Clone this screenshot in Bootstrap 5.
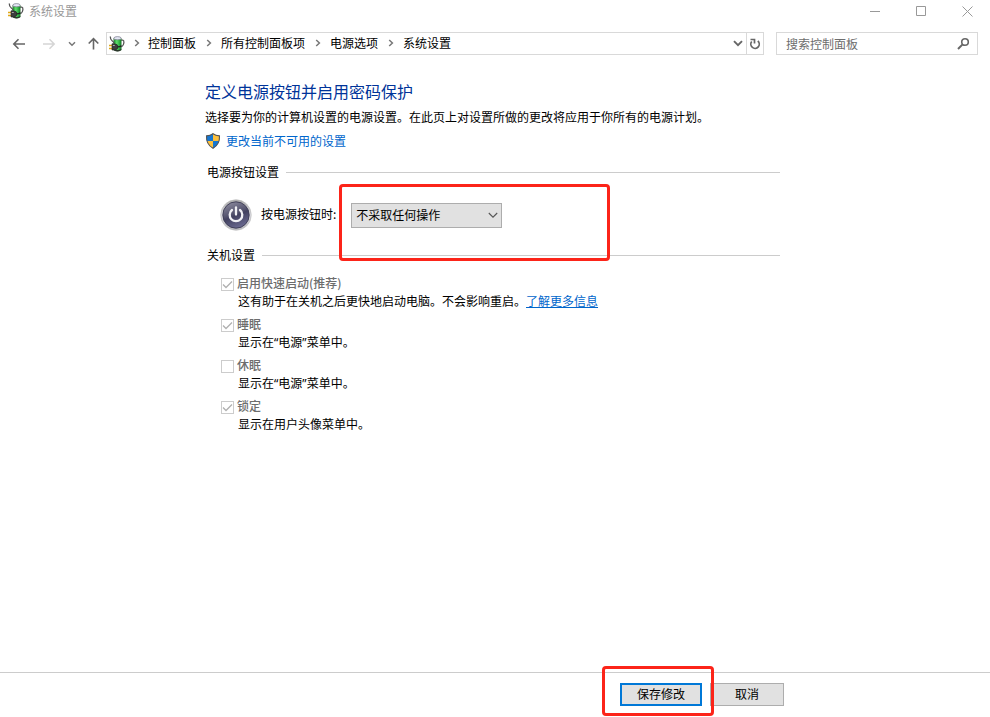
<!DOCTYPE html>
<html lang="zh-CN">
<head>
<meta charset="utf-8">
<meta name="viewport" content="width=device-width, initial-scale=1">
<title>系统设置</title>
<link rel="stylesheet" href="https://cdn.jsdelivr.net/npm/bootstrap@5.3.0/dist/css/bootstrap.min.css">
<style>
body{font-family:"Noto Sans CJK SC","Liberation Sans",sans-serif;font-size:12px;line-height:18px;color:#000;background:#fff}
svg{display:block;flex:none}
button{color:inherit}
.title-bar{height:24px;padding:0 0 2px 8px;gap:5px;color:#999}
.win-btn{width:46px;height:22px;border:0;background:none;padding:0;color:#999}
.nav-row{margin-top:8px;height:23px;padding:0 12px}
.plain-btn{border:0;background:none;padding:0;color:#666}
.nav-keys{width:94px}
.address,.search-box{border:1px solid #d9d9d9;height:23px}
.address{padding-left:2px}
.crumb-sep{width:25px;color:#777}
.crumb-sep:first-child{width:23px}
.crumbs{padding-bottom:2px}
.crumbs a{color:#000;text-decoration:none}
.refresh{width:17px;border-left:1px solid #d9d9d9}
.drop{width:16px}
.search-box{width:202px;margin-left:12px;padding:0 7px 0 9px}
.search-box input{border:0;outline:0;padding:0;background:none;width:100%;min-width:0}
.search-box input::placeholder{color:#6d6d6d;opacity:1}
.settings{padding:24px 210px 0 205px}
.settings h1{font-size:16px;line-height:24px;font-weight:400;color:#039;margin:0 0 2px}
.intro{line-height:24px;margin:0}
.elevate{height:23px;gap:5px}
.settings a{color:#06c}
.elevate a{text-decoration:none}
.group-title{font-size:12px;line-height:18px;font-weight:400;margin:0;padding-left:2px;gap:7px}
.group-title::after{content:"";flex:1;height:1px;background:#ccc}
.group-title.first-group{margin-top:11px}
.power-row{margin:17px 0 14px;padding-left:15px;height:34px}
.power-row label{margin-left:9px;padding-bottom:2px}
.select-wrap{margin-left:15px;width:151px}
.select-wrap select{appearance:none;width:100%;height:25px;border:1px solid #adadad;border-radius:0;background:#e1e1e1;padding:0 20px 1px 4px;color:#000}
.select-wrap svg{right:4px;top:9px;pointer-events:none}
.callout-box{border:3px solid #fc2419;border-radius:4px;pointer-events:none}
.around-select{left:-12px;top:-19px;width:271px;height:77px}
.around-save{left:-18px;top:-17px;width:112px;height:50px}
.options{padding:10px 0 0 16px;gap:5px}
.options label{color:#6d6d6d;font-weight:500}
.options input{appearance:none;flex:none;width:13px;height:13px;margin:4px 3px 0 0;border:1px solid #ccc;background:#fff}
.options input:checked{background:url("data:image/svg+xml,%3Csvg xmlns='http://www.w3.org/2000/svg' viewBox='0 0 11 11'%3E%3Cpath d='M1 5.5 4 8.5 10 2.5' fill='none' stroke='%23b0b0b0' stroke-width='1.3'/%3E%3C/svg%3E")}
.options p{margin:0;padding-left:17px}
.quote-mark{font-family:"Noto Sans","Open Sans",sans-serif;line-height:12px}
.actions{border-top:1px solid #ccc;height:45px;padding:10px 206px 0 0;gap:8px}
.action-btn{height:23px;width:74px;border:1px solid #adadad;background:#e1e1e1;padding:0 0 2px;line-height:18px}
.action-btn.primary{width:82px;border:2px solid #0078d7}
</style>
</head>
<body>
<svg width="0" height="0" class="position-absolute" aria-hidden="true">
<defs>
<linearGradient id="cell" x1="0" x2="1"><stop offset="0" stop-color="#1b8a2b"/><stop offset=".4" stop-color="#5fe06c"/><stop offset="1" stop-color="#0f8a24"/></linearGradient>
<linearGradient id="orb" x1=".2" x2=".6" y1="0" y2="1"><stop offset="0" stop-color="#8d8c9f"/><stop offset=".45" stop-color="#55546f"/><stop offset=".55" stop-color="#424160"/><stop offset="1" stop-color="#6c6b92"/></linearGradient>
<linearGradient id="rim" x2="0" y2="1"><stop offset="0" stop-color="#aaa"/><stop offset=".5" stop-color="#dcdce2"/><stop offset="1" stop-color="#b8b8bc"/></linearGradient>
<symbol id="power-icon" viewBox="0 0 16 16">
<path d="M12 4.200h1.800q1.300.3 1.100 2.600-.2 2.800-2.500 4.200" fill="none" stroke="#555" stroke-width="1.300"/>
<path d="M4.800 2.500v11.500q3.700 2 7.400 0V2.500z" fill="url(#cell)" stroke="#3a6b42" stroke-width=".6"/>
<path d="M4.800 13q3.700 2 7.400 0v1.200q-3.700 2.700-7.400 0z" fill="#2c382c"/>
<ellipse cx="8.500" cy="2.200" rx="3.700" ry="1.600" fill="#e4e6f5" stroke="#757786" stroke-width=".7"/>
<path d="M1.300.5q-.2 3 2 4.500 1.500 1 1.700 2" fill="none" stroke="#555" stroke-width="1.300"/>
<path d="M0 9.500h3.500M0 12.500h3.500" stroke="#e0a818" stroke-width="1.600"/>
<path d="M3 7.800h2.500q3.500.3 3.500 3.100t-3.500 3.100H3z" fill="#3d3d3d" stroke="#222" stroke-width=".6"/>
<path d="M3.800 9.500h2" stroke="#aaa" stroke-width="1"/>
<path d="M8.500 10.900q3 0 4-1.300" fill="none" stroke="#222" stroke-width="1.400"/>
</symbol>
<symbol id="chev-right" viewBox="0 0 6 8"><path d="M1.200 1 4.400 4 1.200 7" fill="none" stroke="currentColor" stroke-width="1.500"/></symbol>
</defs>
</svg>
<div class="min-vh-100 d-flex flex-column">
<header>
<div class="title-bar d-flex align-items-center">
<svg width="16" height="16"><use href="#power-icon"/></svg>
<span class="flex-grow-1">系统设置</span>
<div class="d-flex">
<button class="win-btn d-flex align-items-center justify-content-center" aria-label="最小化"><svg width="10" height="10"><path d="M0 5.500h10" stroke="currentColor"/></svg></button>
<button class="win-btn d-flex align-items-center justify-content-center" aria-label="最大化"><svg width="10" height="10"><path d="M.5.5h9v9h-9z" fill="none" stroke="currentColor"/></svg></button>
<button class="win-btn d-flex align-items-center justify-content-center" aria-label="关闭"><svg width="11" height="11"><path d="m.5.500 10 10m0-10-10 10" stroke="currentColor"/></svg></button>
</div>
</div>
<nav class="nav-row d-flex" aria-label="导航">
<div class="nav-keys d-flex align-items-center">
<button class="plain-btn" aria-label="后退"><svg width="14" height="12"><path d="M13 6H2M6.500 1.300 1.800 6l4.700 4.700" fill="none" stroke="#666" stroke-width="1.600"/></svg></button>
<button class="plain-btn ms-3" aria-label="前进" disabled><svg width="14" height="12"><path d="M1 6h11M7.500 1.300 12.200 6l-4.700 4.700" fill="none" stroke="#d5d5d5" stroke-width="1.500"/></svg></button>
<button class="plain-btn ms-2 ps-1" aria-label="最近位置"><svg width="8" height="6"><path d="m1 1.300 3 3 3-3" fill="none" stroke="#777" stroke-width="1.500"/></svg></button>
<button class="plain-btn ms-2 ps-1" aria-label="上移"><svg width="12" height="13"><path d="M5.500 12.500V2M.7 6.500l4.800-4.800 4.800 4.800" fill="none" stroke="#666" stroke-width="1.600"/></svg></button>
</div>
<div class="address d-flex flex-grow-1 align-items-center">
<svg width="16" height="16"><use href="#power-icon"/></svg>
<div class="crumbs d-flex align-items-center flex-grow-1">
<span class="crumb-sep d-flex justify-content-center"><svg width="6" height="8"><use href="#chev-right"/></svg></span><a href="#">控制面板</a>
<span class="crumb-sep d-flex justify-content-center"><svg width="6" height="8"><use href="#chev-right"/></svg></span><a href="#">所有控制面板项</a>
<span class="crumb-sep d-flex justify-content-center"><svg width="6" height="8"><use href="#chev-right"/></svg></span><a href="#">电源选项</a>
<span class="crumb-sep d-flex justify-content-center"><svg width="6" height="8"><use href="#chev-right"/></svg></span><a href="#">系统设置</a>
</div>
<button class="plain-btn drop d-flex justify-content-center" aria-label="历史记录"><svg width="10" height="7"><path d="m1 1.200 4 4 4-4" fill="none" stroke="#666" stroke-width="1.900"/></svg></button>
<button class="plain-btn refresh h-100 d-flex align-items-center justify-content-center" aria-label="刷新"><svg width="12" height="12"><path d="M8.800 3A4.200 4.200 0 1 1 2.700 3.600" fill="none" stroke="#666" stroke-width="1.700"/><path d="M1.500 1.500h4v4" fill="none" stroke="#666" stroke-width="1.700"/></svg></button>
</div>
<div class="search-box d-flex align-items-center">
<input type="search" placeholder="搜索控制面板" aria-label="搜索控制面板">
<svg width="13" height="13"><circle cx="8" cy="5" r="3.300" fill="none" stroke="#666" stroke-width="1.600"/><path d="M5.600 7.400 1 12" stroke="#666" stroke-width="2"/></svg>
</div>
</nav>
</header>
<main class="settings flex-grow-1">
<h1>定义电源按钮并启用密码保护</h1>
<p class="intro">选择要为你的计算机设置的电源设置。在此页上对设置所做的更改将应用于你所有的电源计划。</p>
<div class="elevate d-flex align-items-center">
<svg width="16" height="16" viewBox="0 0 16 16"><path d="M8 .6Q5.500 2.600 1.500 2.800 1 11.500 8 15.400 15 11.500 14.500 2.800 10.500 2.600 8 .6z" fill="#ffc13b"/><path d="M8 .6Q5.500 2.600 1.500 2.800q-.2 2.800.6 5.200H8zM8 8v7.400Q12.500 13 13.900 8z" fill="#1677d2"/><path d="M8 .8Q5.500 2.700 1.500 2.900 1 11.500 8 15.300 15 11.500 14.500 2.900 10.500 2.700 8 .8z" fill="none" stroke="#555" stroke-width="1.100"/></svg>
<a href="#">更改当前不可用的设置</a>
</div>
<h2 class="group-title first-group d-flex align-items-center">电源按钮设置</h2>
<div class="power-row d-flex align-items-center">
<svg width="32" height="32" viewBox="0 0 32 32"><circle cx="16" cy="16" r="15.300" fill="url(#rim)" stroke="#bbb" stroke-width=".6"/><circle cx="16" cy="16" r="13.200" fill="url(#orb)" stroke="#3b3a52" stroke-width=".9"/><path d="M12 11a6.300 6.300 0 1 0 8 0" fill="none" stroke="#f1f1f5" stroke-width="2.300" stroke-linecap="round"/><path d="M16 8.500v7" stroke="#f1f1f5" stroke-width="2.300" stroke-linecap="round"/></svg>
<label for="press-power">按电源按钮时:</label>
<div class="select-wrap position-relative">
<select id="press-power"><option>不采取任何操作</option><option>睡眠</option><option>休眠</option><option>关机</option></select>
<svg class="position-absolute" width="10" height="7"><path d="m.8 1 4.200 4.200L9.200 1" fill="none" stroke="#555" stroke-width="1.100"/></svg>
<div class="callout-box around-select position-absolute"></div>
</div>
</div>
<h2 class="group-title d-flex align-items-center">关机设置</h2>
<div class="options d-flex flex-column">
<div><div class="d-flex"><input type="checkbox" id="fast" checked disabled><label for="fast">启用快速启动(推荐)</label></div><p>这有助于在关机之后更快地启动电脑。不会影响重启。<a href="#">了解更多信息</a></p></div>
<div><div class="d-flex"><input type="checkbox" id="sleep" checked disabled><label for="sleep">睡眠</label></div><p>显示在<span class="quote-mark">“</span>电源<span class="quote-mark">”</span>菜单中。</p></div>
<div><div class="d-flex"><input type="checkbox" id="hibernate" disabled><label for="hibernate">休眠</label></div><p>显示在<span class="quote-mark">“</span>电源<span class="quote-mark">”</span>菜单中。</p></div>
<div><div class="d-flex"><input type="checkbox" id="lock" checked disabled><label for="lock">锁定</label></div><p>显示在用户头像菜单中。</p></div>
</div>
</main>
<footer class="actions d-flex justify-content-end">
<div class="position-relative"><button class="action-btn primary">保存修改</button><div class="callout-box around-save position-absolute"></div></div>
<button class="action-btn">取消</button>
</footer>
</div>
<script src="https://cdn.jsdelivr.net/npm/bootstrap@5.3.0/dist/js/bootstrap.bundle.min.js"></script>
</body>
</html>
